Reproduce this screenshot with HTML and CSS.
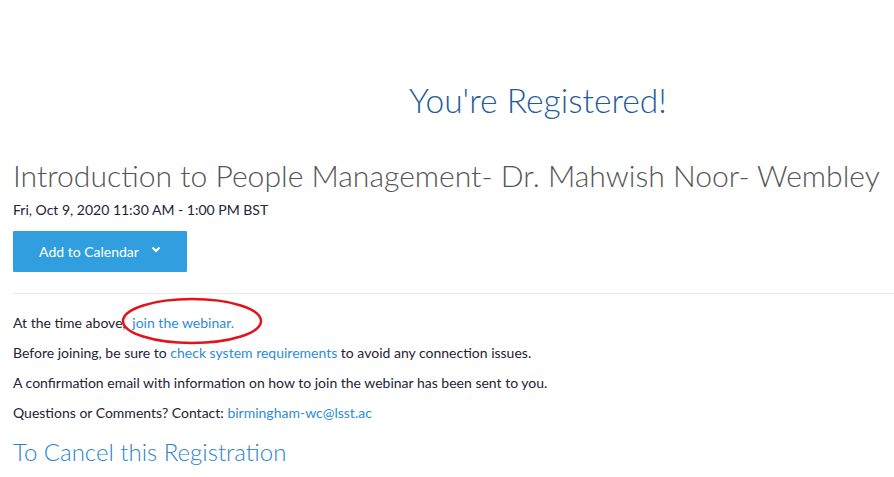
FILE: index.html
```html
<!DOCTYPE html>
<html>
<head>
<meta charset="utf-8">
<link rel="stylesheet" href="styles.css">
</head>
<body>
<div class="page">
  <h1 class="registered">You're Registered!</h1>
  <h2 class="event-title">Introduction to People Management- Dr. Mahwish Noor- Wembley</h2>
  <div class="event-time">Fri, Oct 9, 2020 11:30 AM - 1:00 PM BST</div>
  <button class="cal-btn">Add to Calendar <svg class="chev" width="10" height="7" viewBox="0 0 10 7"><path d="M1.5 1.5 L5 5 L8.5 1.5" fill="none" stroke="#fff" stroke-width="2"/></svg></button>
  <hr class="divider">
  <div class="info">
    <p class="line">At the time above, <a class="link annotated" href="#">join the webinar.<svg class="mark" width="144" height="52" viewBox="0 0 144 52"><ellipse cx="72" cy="26" rx="69" ry="22" fill="none" stroke="#e2141b" stroke-width="2.5"/></svg></a></p>
    <p class="line">Before joining, be sure to <a class="link" href="#">check system requirements</a> to avoid any connection issues.</p>
    <p class="line">A confirmation email with information on how to join the webinar has been sent to you.</p>
    <p class="line">Questions or Comments? Contact: <a class="link" href="#">birmingham-wc@lsst.ac</a></p>
  </div>
  <h3 class="cancel">To Cancel this Registration</h3>
</div>
</body>
</html>
```
FILE: styles.css
```css
html, body { margin: 0; padding: 0; background: #fff; }
body { font-family: Lato, "Open Sans", sans-serif; color: #232333; }
.page { padding: 0 0 0 13px; }
.registered {
  margin: 0;
  padding: 77px 0 0 396px;
  font-size: 33.6px;
  font-weight: 300;
  color: #1f5d9c;
  line-height: 46px;
}
.event-title {
  margin: 33px 0 0 0;
  font-size: 30.1px;
  font-weight: 300;
  color: #555;
  line-height: 38px;
}
.event-time {
  margin-top: 8px;
  font-size: 14px;
  color: #232333;
  line-height: 16px;
}
.cal-btn {
  margin-top: 13px;
  width: 174px;
  height: 41px;
  border: none;
  background: #319fdf;
  color: #fff;
  font-family: Lato, sans-serif;
  font-size: 14px;
  display: flex;
  align-items: center;
  justify-content: center;
  gap: 12px;
  padding: 0;
  border-radius: 1px;
}
.chev { margin-top: -5px; }
.divider {
  border: none;
  border-top: 1px solid #ebebeb;
  margin: 21px 0 0 0;
}
.info { margin-top: 21px; }
.line {
  margin: 0 0 14px 0;
  font-size: 14px;
  line-height: 16px;
  color: #232333;
}
.link { color: #2d8cd6; text-decoration: none; }
.annotated { position: relative; margin-left: 3px; }
.mark { position: absolute; left: -12px; top: -19px; pointer-events: none; }
.cancel {
  margin: 16px 0 0 0;
  font-size: 24px;
  font-weight: 300;
  color: #2a84cc;
  line-height: 30px;
}
```
